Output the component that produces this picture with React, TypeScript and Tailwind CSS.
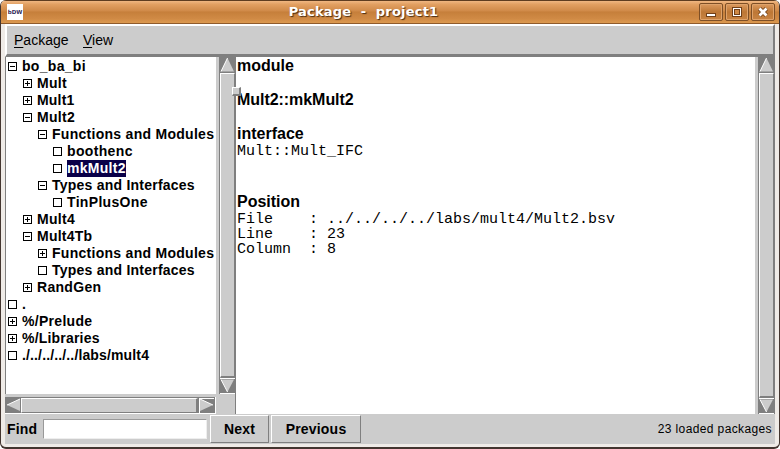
import type { ReactNode } from "react";

type Kind = "open" | "closed" | "leaf";
type Row = { label: string; depth: number; kind: Kind; tracking: string; selected?: boolean };

const rows: Row[] = [
  { label: "bo_ba_bi", depth: 0, kind: "open", tracking: "tracking-[0.3px]" },
  { label: "Mult", depth: 1, kind: "closed", tracking: "tracking-[0.3px]" },
  { label: "Mult1", depth: 1, kind: "closed", tracking: "tracking-[0.2px]" },
  { label: "Mult2", depth: 1, kind: "open", tracking: "tracking-[0.3px]" },
  { label: "Functions and Modules", depth: 2, kind: "open", tracking: "tracking-[0.28px]" },
  { label: "boothenc", depth: 3, kind: "leaf", tracking: "tracking-[0.35px]" },
  { label: "mkMult2", depth: 3, kind: "leaf", tracking: "tracking-[0.28px]", selected: true },
  { label: "Types and Interfaces", depth: 2, kind: "open", tracking: "tracking-[0.23px]" },
  { label: "TinPlusOne", depth: 3, kind: "leaf", tracking: "tracking-[0.33px]" },
  { label: "Mult4", depth: 1, kind: "closed", tracking: "tracking-[0.3px]" },
  { label: "Mult4Tb", depth: 1, kind: "open", tracking: "tracking-[0.25px]" },
  { label: "Functions and Modules", depth: 2, kind: "closed", tracking: "tracking-[0.28px]" },
  { label: "Types and Interfaces", depth: 2, kind: "leaf", tracking: "tracking-[0.23px]" },
  { label: "RandGen", depth: 1, kind: "closed", tracking: "tracking-[0.3px]" },
  { label: ".", depth: 0, kind: "leaf", tracking: "tracking-[0px]" },
  { label: "%/Prelude", depth: 0, kind: "closed", tracking: "tracking-[0.3px]" },
  { label: "%/Libraries", depth: 0, kind: "closed", tracking: "tracking-[0.2px]" },
  { label: "./../../../../labs/mult4", depth: 0, kind: "leaf", tracking: "tracking-[0.14px]" },
];

const indents = ["pl-[2px]", "pl-[17px]", "pl-[32px]", "pl-[47px]"];

function NodeBox({ kind }: { kind: Kind }) {
  return (
    <svg width="9" height="9" shapeRendering="crispEdges" className="shrink-0">
      <path d="M.5 .5h8v8h-8z" fill="#fff" stroke="#000" />
      {kind !== "leaf" && <path d="M2 4.5h5" stroke="#000" />}
      {kind === "closed" && <path d="M4.5 2v5" stroke="#000" />}
    </svg>
  );
}

function TitleButton({ children }: { children: ReactNode }) {
  return (
    <div className="flex h-[18px] w-[24px] items-center justify-center rounded-[2px] border border-[#7e4f26] bg-linear-to-b from-[#dc9a5e] via-[#bd7735] to-[#c98443] shadow-[inset_0_0_0_1px_#dfa36b]">
      {children}
    </div>
  );
}

function VerticalScrollbar({ height }: { height: string }) {
  return (
    <div className={"flex w-[17px] shrink-0 flex-col bg-[#7f7f7f] " + height}>
      <svg width="17" height="16" className="shrink-0">
        <path d="M8.5 1L2 14.5h13z" fill="#ccc" />
        <path d="M8.5 1L2 14.5" stroke="#fff" fill="none" />
      </svg>
      <div className="ml-px w-[15px] flex-1 border-t border-r border-b-2 border-l border-t-white border-r-[#7f7f7f] border-b-[#7f7f7f] border-l-white bg-[#cccccc]" />
      <svg width="17" height="16" className="shrink-0">
        <path d="M1 .5h15M1 15.5h15" stroke="#fff" />
        <path d="M2 1.5h13L8.5 14z" fill="#ccc" />
        <path d="M2 1.5L8.5 14" stroke="#fff" fill="none" />
      </svg>
    </div>
  );
}

function Push({ children, width }: { children: ReactNode; width: string }) {
  return (
    <div className={"flex h-[28px] items-center justify-center border border-t-white border-r-[#7f7f7f] border-b-[#7f7f7f] border-l-white bg-[#cccccc] tracking-[0.2px] " + width}>
      {children}
    </div>
  );
}

export default function App() {
  return (
    <div className="flex h-[449px] w-[780px] flex-col overflow-hidden bg-white font-['Liberation_Sans',Arial,sans-serif] text-black">
      <div className="relative flex h-[449px] flex-col overflow-hidden rounded-[6px] border-x border-b-2 border-[#43352f] bg-[#efebe7]">
        <header className="flex h-[24px] shrink-0 items-center border-t border-b border-t-[#5f3d20] border-b-[#8f5a2b] bg-[linear-gradient(to_bottom,#f0b782_0%,#e2a062_15%,#d08a49_45%,#c67f3b_50%,#d08a45_80%,#dc994f_100%)] pl-[6px]">
          <div className="flex h-[16px] w-[16px] items-center justify-center bg-white pt-px font-['DejaVu_Sans'] text-[5.5px] leading-none font-bold text-[#302858]">
            bDW
          </div>
          <div className="flex-1 pl-[5px] text-center font-['DejaVu_Sans'] text-[13px] leading-[20px] font-bold tracking-[0.2px] whitespace-pre text-white [text-shadow:1px_1px_1px_#4a2c12]">
            Package  -  project1
          </div>
          <div className="mr-[4px] flex gap-[2px]">
            <TitleButton>
              <svg width="12" height="12" shapeRendering="crispEdges"><path d="M1 7h10v4H1z" fill="#704019" /><path d="M2 8h8v2H2z" fill="#fff" /></svg>
            </TitleButton>
            <TitleButton>
              <svg width="12" height="12" shapeRendering="crispEdges"><path d="M1 1h10v10H1z" fill="#704019" /><path d="M2 2h8v8H2z" fill="#fff" /><path d="M3 3h6v6H3z" fill="#704019" /><path d="M4 4h4v4H4z" fill="#cf8945" /></svg>
            </TitleButton>
            <TitleButton>
              <svg width="12" height="12"><path d="M2.5 2.5l7 7m0-7l-7 7" stroke="#704019" strokeWidth="4.4" /><path d="M2.5 2.5l7 7m0-7l-7 7" stroke="#fff" strokeWidth="2.8" /></svg>
            </TitleButton>
          </div>
        </header>

        <div className="mx-[4px] flex h-[420px] w-[770px] shrink-0 flex-col bg-[#cccccc]">
          <nav className="flex h-[33px] shrink-0 items-center border-t-2 border-r-2 border-b-3 border-l-2 border-t-white border-r-[#7f7f7f] border-b-[#7f7f7f] border-l-white pl-[7px] text-[14px]">
            <span className="w-[69px]"><u className="underline-offset-2">P</u>ackage</span>
            <span><u className="underline-offset-2">V</u>iew</span>
          </nav>

          <main className="flex h-[357px] shrink-0">
            <section className="w-[214px] shrink-0">
              <div className="h-[337px] w-[211px] border-l border-[#7f7f7f] bg-white pt-px">
                {rows.map((row, i) => (
                  <div key={i} className={"flex h-[17px] items-center gap-[5px] " + indents[row.depth]}>
                    <NodeBox kind={row.kind} />
                    <span className={"text-[14px] leading-[17px] font-bold whitespace-nowrap " + row.tracking + (row.selected ? " bg-[#0a0048] text-white" : "")}>
                      {row.label}
                    </span>
                  </div>
                ))}
              </div>
              <div className="mt-[3px] flex h-[17px] w-[211px] border-r border-b border-white bg-[#7f7f7f]">
                <svg width="16" height="16" className="shrink-0">
                  <path d="M2 8L15 2v12z" fill="#ccc" />
                  <path d="M2 8L15 2" stroke="#fff" />
                </svg>
                <div className="mt-px h-[15px] flex-1 border-t border-r-2 border-b border-l border-t-white border-r-[#7f7f7f] border-b-[#7f7f7f] border-l-white bg-[#cccccc]" />
                <svg width="17" height="16" className="shrink-0">
                  <path d="M1.5 1v15M1 1.5h15" stroke="#fff" />
                  <path d="M15 8L2 2v12z" fill="#ccc" />
                  <path d="M2 2L15 8" fill="none" stroke="#fff" />
                </svg>
              </div>
            </section>
            <VerticalScrollbar height="h-[337px]" />
            <div className="-ml-px w-px bg-[#7f7f7f]" />
            <section className="flex-1 bg-white pl-px">
              <h1 className="h-[34px] text-[16px] leading-[17px] font-bold">module</h1>
              <h1 className="h-[34px] text-[16px] leading-[17px] font-bold tracking-[-0.05px]">Mult2::mkMult2</h1>
              <h1 className="h-[18px] text-[16px] leading-[17px] font-bold">interface</h1>
              <p className="h-[50px] font-['Liberation_Mono',monospace] text-[15px] leading-[17px]">Mult::Mult_IFC</p>
              <h1 className="h-[19px] text-[16px] leading-[17px] font-bold">Position</h1>
              <pre className="font-['Liberation_Mono',monospace] text-[15px] leading-[15px]">{"File    : ../../../../labs/mult4/Mult2.bsv\nLine    : 23\nColumn  : 8"}</pre>
            </section>
            <div className="w-[3px] bg-[#cccccc]" />
            <VerticalScrollbar height="h-[357px]" />
          </main>

          <footer className="flex h-[30px] shrink-0 items-center pl-[2px] text-[14px] font-bold">
            <span className="w-[36px] pt-px tracking-[0.2px]">Find</span>
            <div className="mr-[3px] h-[20px] w-[164px] border border-t-[#999] border-r-[#eee] border-b-[#eee] border-l-[#999] bg-white" />
            <Push width="w-[59px]">Next</Push>
            <div className="w-[2px]" />
            <Push width="w-[90px]">Previous</Push>
            <span className="ml-auto pr-[3px] text-[12px] font-normal tracking-[0.38px]">23 loaded packages</span>
          </footer>
        </div>

        <div className="absolute top-[87px] left-[231px] h-[9px] w-[9px] border-t border-r-2 border-b-2 border-l border-t-white border-r-[#7f7f7f] border-b-[#7f7f7f] border-l-white bg-[#cccccc]" />
      </div>
    </div>
  );
}
